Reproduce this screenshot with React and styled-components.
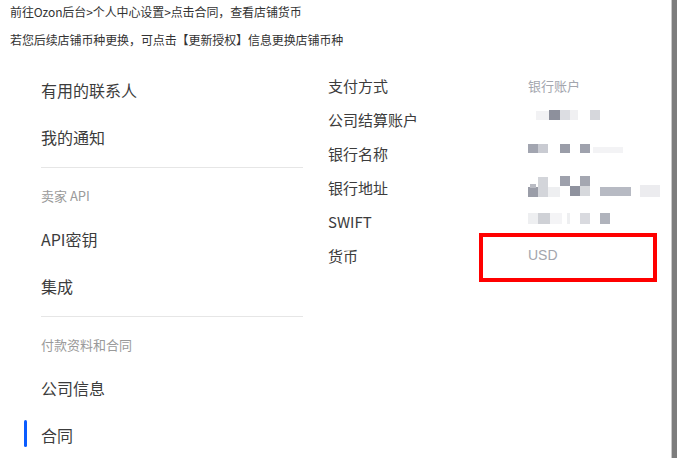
import React from "react";
import styled, { createGlobalStyle } from "styled-components";

const Global = createGlobalStyle`
  html, body { margin: 0; padding: 0; background: #fff; }
  body { font-family: "Noto Sans CJK SC", "Noto Sans", sans-serif; color: #333; }
`;

const Frame = styled.div`
  display: flex;
  width: 677px;
  height: 458px;
  overflow: hidden;
`;

const Page = styled.div`
  flex: 1;
  display: flex;
  flex-direction: column;
  min-width: 0;
`;

const ScrollStrip = styled.div`
  width: 5px;
  background: #7d7d7d;
  border-left: 1px solid #c9c9c9;
`;

const Notice = styled.div`
  display: flex;
  flex-direction: column;
  gap: 8px;
  padding: 2px 10px 0;
`;

const NoticeLine = styled.div`
  font-size: 12px;
  line-height: 20px;
  color: #333;
  white-space: nowrap;
  letter-spacing: -0.1px;
`;

const Main = styled.div`
  display: flex;
  padding-top: 17px;
`;

const Sidebar = styled.nav`
  display: flex;
  flex-direction: column;
  width: 262px;
  margin-left: 41px;
`;

const NavItem = styled.div`
  position: relative;
  height: 47px;
  line-height: 46px;
  font-size: 16px;
  color: #3c3c3c;
  &::before {
    content: "";
    display: ${(p) => (p.$active ? "block" : "none")};
    position: absolute;
    left: -17px;
    top: 8px;
    width: 3px;
    height: 27px;
    border-radius: 2px;
    background: #0a5cff;
  }
`;

const Divider = styled.div`
  height: 1px;
  background: #e6e6e6;
  margin: 6px 0 0;
`;

const SectionTitle = styled.div`
  padding: 19px 0 11px;
  line-height: 18px;
  font-size: 13px;
  color: #9a9a9a;
`;

const Details = styled.div`
  display: flex;
  flex-direction: column;
  margin-left: 25px;
  margin-top: 1px;
`;

const Row = styled.div`
  position: relative;
  display: grid;
  grid-template-columns: 200px 1fr;
  align-items: center;
  height: 34px;
`;

const Label = styled.div`
  font-size: 15px;
  color: #3c3c3c;
`;

const Value = styled.div`
  font-size: ${(p) => (p.$size || 13)}px;
  color: #a3a6ae;
  ${(p) => (p.$latin ? `font-family: "Liberation Sans", Arial, sans-serif;` : "")}
`;

const Highlight = styled.div`
  position: absolute;
  left: 151px;
  top: -5px;
  width: 178px;
  height: 49px;
  box-sizing: border-box;
  border: 4px solid #ff0000;
  pointer-events: none;
`;

const MosaicSvg = styled.svg`
  display: block;
`;

const mosaics = {
  account: [
    [5, 4, 14, 9, "#f2f2f4"],
    [18, 3, 11, 10, "#8d909c"],
    [29, 3, 10, 10, "#dcdde2"],
    [39, 3, 8, 10, "#f0f0f2"],
    [59, 3, 10, 10, "#d6d7dc"],
  ],
  bank: [
    [-3, 3, 10, 9, "#a2a5b0"],
    [7, 3, 10, 9, "#c9cbd2"],
    [29, 3, 10, 9, "#9a9da8"],
    [49, 3, 10, 9, "#9fa2ad"],
    [62, 6, 30, 6, "#f3f3f5"],
  ],
  address: [
    [-3, 12, 10, 10, "#9a9da8"],
    [-1, 9, 6, 4, "#b9bbc3"],
    [7, 2, 10, 20, "#d3d5da"],
    [17, 12, 12, 10, "#eeeff1"],
    [29, 1, 10, 10, "#9ea1ac"],
    [39, 11, 10, 10, "#8f929e"],
    [49, 1, 10, 10, "#a4a7b1"],
    [49, 11, 10, 10, "#d6d8dc"],
    [69, 12, 31, 9, "#b7bac3"],
    [109, 10, 20, 12, "#ececef"],
  ],
  swift: [
    [-3, 4, 10, 11, "#eeeff1"],
    [7, 4, 12, 11, "#cfd1d6"],
    [19, 4, 12, 11, "#f4f4f6"],
    [36, 4, 3, 11, "#eeeff1"],
    [49, 4, 10, 11, "#d9dadf"],
    [69, 4, 10, 11, "#b0b3bc"],
  ],
};

const Mosaic = ({ kind }) => (
  <MosaicSvg width="140" height="24" viewBox="-3 0 140 24" aria-hidden="true">
    {mosaics[kind].map(([x, y, w, h, c], i) => (
      <rect key={i} x={x} y={y} width={w} height={h} fill={c} />
    ))}
  </MosaicSvg>
);

const navTop = [
  { label: "有用的联系人" },
  { label: "我的通知" },
];

export default function App() {
  return (
    <>
      <Global />
      <Frame>
        <Page>
          <Notice>
            <NoticeLine>前往Ozon后台&gt;个人中心设置&gt;点击合同，查看店铺货币</NoticeLine>
            <NoticeLine>若您后续店铺币种更换，可点击【更新授权】信息更换店铺币种</NoticeLine>
          </Notice>
          <Main>
            <Sidebar>
              {navTop.map((n) => (
                <NavItem key={n.label}>{n.label}</NavItem>
              ))}
              <Divider />
              <SectionTitle>卖家 API</SectionTitle>
              <NavItem>API密钥</NavItem>
              <NavItem>集成</NavItem>
              <Divider />
              <SectionTitle>付款资料和合同</SectionTitle>
              <NavItem>公司信息</NavItem>
              <NavItem $active>合同</NavItem>
            </Sidebar>
            <Details>
              <Row>
                <Label>支付方式</Label>
                <Value>银行账户</Value>
              </Row>
              <Row>
                <Label>公司结算账户</Label>
                <Mosaic kind="account" />
              </Row>
              <Row>
                <Label>银行名称</Label>
                <Mosaic kind="bank" />
              </Row>
              <Row>
                <Label>银行地址</Label>
                <Mosaic kind="address" />
              </Row>
              <Row>
                <Label>SWIFT</Label>
                <Mosaic kind="swift" />
              </Row>
              <Row>
                <Label>货币</Label>
                <Value $size={14} $latin>USD</Value>
                <Highlight />
              </Row>
            </Details>
          </Main>
        </Page>
        <ScrollStrip />
      </Frame>
    </>
  );
}
